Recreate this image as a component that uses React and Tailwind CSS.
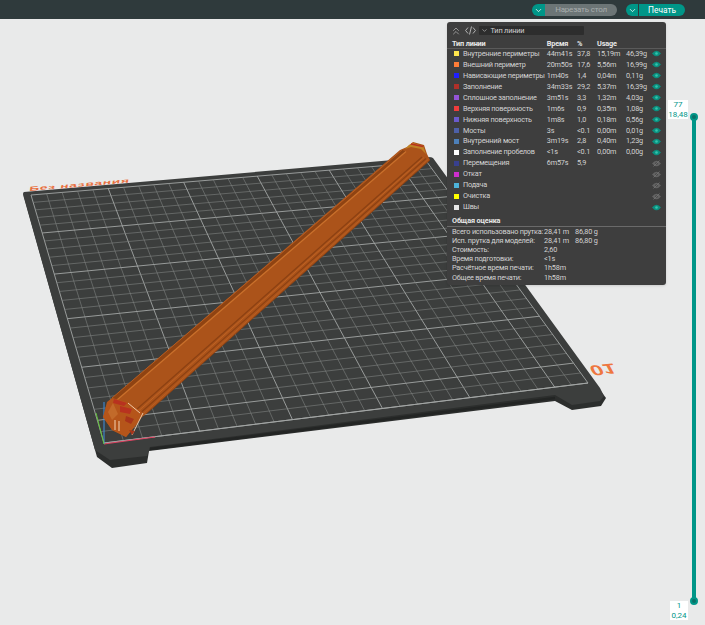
import { ChevronDown, ChevronsUp } from 'lucide-react';

const rows = [
  { name: 'Внутренние периметры', color: 'bg-[#ffe64d]', time: '44m41s', pct: '37,8', len: '15,19m', g: '46,39g', on: true },
  { name: 'Внешний периметр', color: 'bg-[#ff7d38]', time: '20m50s', pct: '17,6', len: '5,56m', g: '16,99g', on: true },
  { name: 'Нависающие периметры', color: 'bg-[#1f1fff]', time: '1m40s', pct: '1,4', len: '0,04m', g: '0,11g', on: true },
  { name: 'Заполнение', color: 'bg-[#b03029]', time: '34m33s', pct: '29,2', len: '5,37m', g: '16,39g', on: true },
  { name: 'Сплошное заполнение', color: 'bg-[#9454d6]', time: '3m51s', pct: '3,3', len: '1,32m', g: '4,03g', on: true },
  { name: 'Верхняя поверхность', color: 'bg-[#f03c3c]', time: '1m6s', pct: '0,9', len: '0,35m', g: '1,08g', on: true },
  { name: 'Нижняя поверхность', color: 'bg-[#6a5acd]', time: '1m8s', pct: '1,0', len: '0,18m', g: '0,56g', on: true },
  { name: 'Мосты', color: 'bg-[#4d60a8]', time: '3s', pct: '<0.1', len: '0,00m', g: '0,01g', on: true },
  { name: 'Внутренний мост', color: 'bg-[#4d80ba]', time: '3m19s', pct: '2,8', len: '0,40m', g: '1,23g', on: true },
  { name: 'Заполнение пробелов', color: 'bg-[#ffffff]', time: '<1s', pct: '<0.1', len: '0,00m', g: '0,00g', on: true },
  { name: 'Перемещения', color: 'bg-[#38408f]', time: '6m57s', pct: '5,9', len: '', g: '', on: false },
  { name: 'Откат', color: 'bg-[#cc2ecc]', on: false },
  { name: 'Подача', color: 'bg-[#4db3d9]', on: false },
  { name: 'Очистка', color: 'bg-[#ffff00]', on: false },
  { name: 'Швы', color: 'bg-[#e6e6e6]', on: true },
];

const summary = [
  ['Всего использовано прутка:', '28,41 m', '86,80 g'],
  ['Исп. прутка для моделей:', '28,41 m', '86,80 g'],
  ['Стоимость:', '2,60'],
  ['Время подготовки:', '<1s'],
  ['Расчётное время печати:', '1h58m'],
  ['Общее время печати:', '1h58m'],
];

// projects a 0..1 bed position onto the screen quad of the plate grid
function bedPoint(u, v) {
  const [p0, p1, p2, p3] = [[31, 195], [427, 162], [588, 383], [104, 443]];
  const dx1 = p1[0] - p2[0], dx2 = p3[0] - p2[0], sx = p0[0] - p1[0] + p2[0] - p3[0];
  const dy1 = p1[1] - p2[1], dy2 = p3[1] - p2[1], sy = p0[1] - p1[1] + p2[1] - p3[1];
  const den = dx1 * dy2 - dx2 * dy1;
  const g = (sx * dy2 - dx2 * sy) / den;
  const h = (dx1 * sy - sx * dy1) / den;
  const a = p1[0] - p0[0] + g * p1[0], b = p3[0] - p0[0] + h * p3[0];
  const d = p1[1] - p0[1] + g * p1[1], e = p3[1] - p0[1] + h * p3[1];
  const w = g * u + h * v + 1;
  return [(a * u + b * v + p0[0]) / w, (d * u + e * v + p0[1]) / w];
}

function PlateGrid() {
  const cells = 27;
  const lines = [];
  for (let i = 0; i <= cells; i++) {
    const t = i / cells;
    const major = i % 5 === 0 || i === cells;
    lines.push([bedPoint(t, 0), bedPoint(t, 1), major]);
    lines.push([bedPoint(0, t), bedPoint(1, t), major]);
  }
  return lines.map(([a, b, major], i) => (
    <line
      key={i}
      x1={a[0]}
      y1={a[1]}
      x2={b[0]}
      y2={b[1]}
      stroke={major ? '#a3a6a5' : '#7f8382'}
      strokeWidth={major ? 0.9 : 0.6}
    />
  ));
}

function Scene() {
  return (
    <svg className="absolute left-0 top-0" width="705" height="625" viewBox="0 0 705 625">
      {/* plate side */}
      <path d="M24 197 L97 457 L112 468 L147 463 L149 451 L555 401 L572 410 L601 406 L606 398 L600 390 L432 160 Z" fill="#2c2e2d" />
      <path d="M24 192 Q22 193 24 198 L95 450 L110 460 L147 456 L150 447 L555 395 L572 405 L600 401 L604 396 L600 388 L433 158 Q432 157 428 157 Z" fill="#3c3e3d" />
      <path d="M150 449 L555 398" stroke="#232524" strokeWidth="2.5" />
      <PlateGrid />
      <path d="M104 443 L588 383" stroke="#a3a6a5" strokeWidth="1" />

      {/* plate labels */}
      <text
        transform="matrix(1.38 -0.115 -0.1 0.62 29 191)"
        fontFamily="'Liberation Sans', sans-serif"
        fontSize="10"
        fontWeight="700"
        fill="#e8703f"
        letterSpacing="0.5"
      >
        Без названия
      </text>
      <text
        transform="matrix(1.6 -0.16 -0.55 -1 588 366)"
        fontFamily="'Liberation Sans', sans-serif"
        fontSize="14"
        fontWeight="700"
        fill="#ee7740"
      >
        01
      </text>

      {/* axes */}
      <path d="M104 444 L155 437" stroke="#e0405f" strokeWidth="1" />
      <path d="M104 444 L104 402" stroke="#3f8fe0" strokeWidth="1" />
      <path d="M104 444 L96 413" stroke="#62c43a" strokeWidth="1" />

      {/* model */}
      <path d="M112 398 L400 150 L407 147 L413 142 L424 145 L427 154 L430 160 L146 414 L142 417 L136 425 L126 437 L112 430 L103 417 Z" fill="#ab531a" />
      <path d="M112 398 L117 400 L406 151.5 L402 150 Z" fill="#8f4312" />
      <path d="M112 398 L402 150" stroke="#bd6224" strokeWidth="0.8" />
      <path d="M117 400 L406 151.5" stroke="#c9702c" strokeWidth="1.3" />
      <path d="M136.5 409.5 L422 157" stroke="#8c4113" strokeWidth="1.3" />
      <path d="M139 410.5 L424 157.5" stroke="#c06426" strokeWidth="0.9" />
      <path d="M141.5 412 L426 158.5" stroke="#8c4113" strokeWidth="1.2" />
      <path d="M144 413 L428 159.5" stroke="#b85e22" strokeWidth="1" />
      <path d="M146 414 L430 160" stroke="#8a3f10" strokeWidth="0.8" />

      {/* near end of the bar */}
      <path d="M107 402 L112 398 L127 402 L142 412 L137 424 L126 437 L112 430 L103 417 Z" fill="#b5551a" />
      <path d="M114 399 L127 403 L124 406 L113 403 Z M120 406 L132 409 L130 414 L120 412 Z" fill="#b8321f" />
      <path d="M113 403 L118 414 L112 420 L108 412 Z" fill="#c26a2a" />
      <path d="M128 403 L140 413 M132 435 L143 413" stroke="#eec9a8" strokeWidth="1" fill="none" />
      <path d="M115 420 L115 430 M119 421 L119 431" stroke="#e9bf99" strokeWidth="1.2" />
      <path d="M126 416 L134 419 L131 424 L125 421 Z M129 430 L135 431 L132 435 Z" fill="#a8341a" />

      {/* far end of the bar */}
      <path d="M405 149 L409 145 L413 143 L423 146 L426 154 L421 149 L411 147 Z" fill="#c08226" />
      <path d="M411 144 L423 146.5" stroke="#b8321f" strokeWidth="1.4" />
    </svg>
  );
}

function Eye({ on }) {
  const color = on ? '#0b8f7f' : '#636363';
  return (
    <svg width="9" height="7" viewBox="0 0 18 14">
      <path d="M0 7 Q9 -4 18 7 Q9 18 0 7 Z" fill={color} />
      <circle cx="9" cy="7" r="2.6" fill={on ? '#35c4ad' : '#464646'} />
      {!on && <path d="M3 13 L15 1" stroke="#7a7a7a" strokeWidth="1.4" />}
    </svg>
  );
}

function LegendPanel() {
  return (
    <div className="absolute left-[447px] top-[22px] h-[263px] w-[219px] rounded-[3px] bg-[#3e3e3e] font-['Roboto',sans-serif] text-[7.3px] leading-[10px] tracking-[-0.15px] text-[#d2d2d2] shadow-sm">
      <div className="flex h-[16px] items-center pl-[3px] pt-[1px]">
        <ChevronsUp size={12} strokeWidth={1.2} className="text-[#cfcfcf]" />
        <svg width="11" height="9" viewBox="0 0 11 9" className="ml-[3px] text-[#cfcfcf]" fill="none" stroke="currentColor" strokeWidth="0.8">
          <path d="M3 1.5 L0.6 4.5 L3 7.5 M8 1.5 L10.4 4.5 L8 7.5 M6.5 0.5 L4.5 8.5" />
        </svg>
        <div className="ml-[3px] flex h-[9px] w-[105px] items-center rounded-[1px] bg-[#2d2d2d] pl-[1.5px]">
          <ChevronDown size={7} className="text-[#cfcfcf]" />
          <span className="ml-[3px]">Тип линии</span>
        </div>
      </div>

      <div className="mt-[1px] grid h-[10px] grid-cols-[94.7px_30.3px_20px_40px] items-center border-b border-[#5a5a5a] pl-[5px] font-bold text-[#e8e8e8]">
        <span>Тип линии</span>
        <span>Время</span>
        <span>%</span>
        <span>Usage</span>
      </div>

      <div className="-mt-[0.5px]">
        {rows.map((row) => (
          <div key={row.name} className="flex h-[10.95px] items-center pl-[7px]">
            <span className={`mr-[4px] size-[5px] shrink-0 ${row.color}`} />
            <div className="grid grid-cols-[83.7px_30.3px_20px_29px_26.5px_9px] items-center">
              <span className="whitespace-nowrap tracking-[-0.22px]">{row.name}</span>
              <span>{row.time}</span>
              <span>{row.pct}</span>
              <span>{row.len}</span>
              <span>{row.g}</span>
              <Eye on={row.on} />
            </div>
          </div>
        ))}
      </div>

      <div className="mt-[3px] pl-[5px] font-bold text-[#e8e8e8]">Общая оценка</div>
      <div className="border-t border-[#6a6a6a]">
        {summary.map(([label, a, b]) => (
          <div key={label} className="grid h-[9.2px] grid-cols-[92px_31px_30px] items-center whitespace-nowrap pl-[5px]">
            <span className="tracking-[-0.22px]">{label}</span>
            <span>{a}</span>
            <span>{b}</span>
          </div>
        ))}
      </div>
    </div>
  );
}

function LayerSlider() {
  return (
    <>
      <div className="absolute left-[692px] top-[117px] h-[484px] w-[4px] bg-[#009688]" />
      <div className="absolute left-[690px] top-[113px] size-[8px] rounded-full border-2 border-[#009688] bg-[#0a6f66]" />
      <div className="absolute left-[690px] top-[597px] size-[8px] rounded-full border-2 border-[#009688] bg-[#0a6f66]" />
      <div className="absolute left-[668px] top-[100px] w-[20px] bg-white text-center font-['Roboto',sans-serif] text-[8px] leading-[9.5px] text-[#009688]">
        <div>77</div>
        <div>18,48</div>
      </div>
      <div className="absolute left-[670px] top-[601px] w-[18px] bg-white text-center font-['Roboto',sans-serif] text-[8px] leading-[9.5px] text-[#009688]">
        <div>1</div>
        <div>0,24</div>
      </div>
    </>
  );
}

export default function App() {
  return (
    <div className="relative h-[625px] w-[705px] overflow-hidden bg-[#e9eaea] font-['Roboto',sans-serif]">
      <Scene />

      {/* top bar */}
      <div className="relative flex h-[19px] items-center justify-end bg-[#2f3a3c] pr-[20px] pt-[1px]">
        <button className="flex h-[12px] w-[13px] items-center justify-center rounded-l-full bg-[#009688]">
          <ChevronDown size={9} strokeWidth={2} className="text-white" />
        </button>
        <div className="flex h-[12px] w-[72px] items-center justify-center rounded-r-full bg-[#6c7576] text-[8px] tracking-[-0.2px] text-[#a9aeae]">
          Нарезать стол
        </div>
        <button className="ml-[9px] flex h-[12px] w-[13px] items-center justify-center rounded-l-full border-r border-[#2f3a3c] bg-[#009688]">
          <ChevronDown size={9} strokeWidth={2} className="text-white" />
        </button>
        <div className="flex h-[12px] w-[46px] items-center justify-center rounded-r-full bg-[#009688] text-[8.4px] text-white">
          Печать
        </div>
      </div>

      <LegendPanel />
      <LayerSlider />
    </div>
  );
}
